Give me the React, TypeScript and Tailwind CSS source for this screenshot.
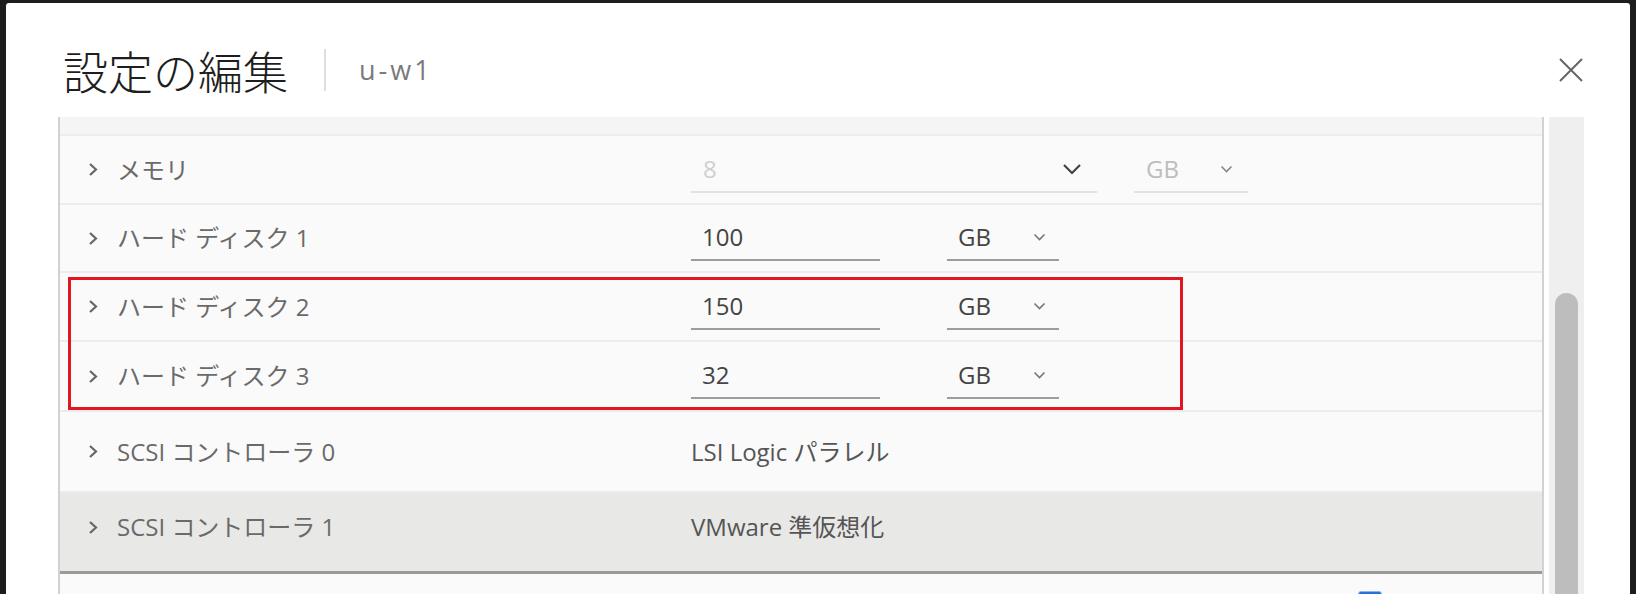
import type { ReactNode } from "react"

const textFont = "font-['Open_Sans','Noto_Sans_CJK_JP',sans-serif]"

function RowChevron() {
  return (
    <svg width="10" height="15" viewBox="0 0 10 15" className="shrink-0 text-[#666]">
      <polyline points="2,2 8,7.5 2,13" fill="none" stroke="currentColor" strokeWidth="2.2" />
    </svg>
  )
}

function DownChevron({ big, muted }: { big?: boolean; muted?: boolean }) {
  if (big) {
    return (
      <svg width="20" height="12" viewBox="0 0 20 12" className="shrink-0 text-[#444]">
        <polyline points="2,2 10,10 18,2" fill="none" stroke="currentColor" strokeWidth="2.2" />
      </svg>
    )
  }
  return (
    <svg
      width="13"
      height="8"
      viewBox="0 0 13 8"
      className={muted ? "shrink-0 text-[#888]" : "shrink-0 text-[#777]"}
    >
      <polyline points="1.5,1.5 6.5,6.5 11.5,1.5" fill="none" stroke="currentColor" strokeWidth="1.6" />
    </svg>
  )
}

function Row({ label, className, children }: { label: string; className: string; children?: ReactNode }) {
  return (
    <div className={`flex border-b-2 border-[#ececec] ${className}`}>
      <div className="flex w-[631px] shrink-0 items-center gap-[19px] pl-[28px] text-[24px] text-[#6a6a6a]">
        <RowChevron />
        <span>{label}</span>
      </div>
      {children}
    </div>
  )
}

function DiskFields({ value }: { value: string }) {
  return (
    <div className="flex items-center">
      <div className="flex h-[46px] w-[189px] items-center border-b-2 border-[#9d9d9d] pl-[11px] text-[24px] text-[#444]">
        {value}
      </div>
      <div className="ml-[67px] flex h-[46px] w-[112px] items-center justify-between border-b-2 border-[#9d9d9d] pl-[11px] pr-[13px] text-[24px] text-[#444]">
        <span>GB</span>
        <DownChevron />
      </div>
    </div>
  )
}

export default function App() {
  return (
    <div className={`h-[594px] w-[1636px] overflow-hidden bg-[#1f1d1b] px-[6px] pt-[3px] ${textFont}`}>
      <div className="h-[700px] rounded-t-[3px] bg-white">
        <div className="flex h-[114px] items-center pl-[57px] pr-[46px] pt-[20px]">
          <h1 className="font-['Noto_Sans_CJK_JP',sans-serif] text-[45px] leading-none font-light text-[#1e1e1e]">
            設定の編集
          </h1>
          <div className="ml-[36px] h-[42px] w-[2px] bg-[#dedede]" />
          <span className="ml-[33px] text-[27px] tracking-[3px] text-[#7a7a7a]">u-w1</span>
          <button type="button" className="ml-auto flex h-[26px] w-[26px] items-center justify-center text-[#666]">
            <svg width="26" height="26" viewBox="0 0 26 26">
              <path d="M2 2 L24 24 M24 2 L2 24" stroke="currentColor" strokeWidth="2" fill="none" />
            </svg>
          </button>
        </div>

        <div className="flex gap-[5px] pl-[52px] pr-[46px]">
          <div className="relative flex-1 border-x-2 border-[#d2d2d2] bg-[#fafafa]">
            <div className="h-[19px] border-b-2 border-[#ececec] bg-[#f5f5f5]" />

            <Row label="メモリ" className="h-[69px]">
              <div className="flex items-center">
                <div className="flex h-[46px] w-[406px] items-center justify-between border-b-2 border-[#e2e2e2] pl-[12px] pr-[15px] text-[24px] text-[#cfcfcf]">
                  <span>8</span>
                  <DownChevron big />
                </div>
                <div className="ml-[37px] flex h-[46px] w-[114px] items-center justify-between border-b-2 border-[#e2e2e2] pl-[12px] pr-[15px] text-[24px] text-[#bdbdbd]">
                  <span>GB</span>
                  <DownChevron muted />
                </div>
              </div>
            </Row>
            <Row label="ハード ディスク 1" className="h-[68px]">
              <DiskFields value="100" />
            </Row>
            <Row label="ハード ディスク 2" className="h-[69px]">
              <DiskFields value="150" />
            </Row>
            <Row label="ハード ディスク 3" className="h-[70px]">
              <DiskFields value="32" />
            </Row>
            <Row label="SCSI コントローラ 0" className="h-[81px]">
              <div className="flex items-center text-[24px] text-[#555]">LSI Logic パラレル</div>
            </Row>
            <div className="flex h-[81px] border-b-[3px] border-[#9a9a9a] bg-[#e8e8e7] pb-[10px]">
              <div className="flex w-[631px] shrink-0 items-center gap-[19px] pl-[28px] text-[24px] text-[#6a6a6a]">
                <RowChevron />
                <span>SCSI コントローラ 1</span>
              </div>
              <div className="flex items-center text-[24px] text-[#555]">VMware 準仮想化</div>
            </div>
            <div className="flex h-[80px] items-start pt-[17px]">
              <div className="flex w-[631px] shrink-0 items-center gap-[19px] pl-[28px] pt-[14px] text-[24px] text-[#6a6a6a]">
                <RowChevron />
                <span>ネットワーク アダプタ 1</span>
              </div>
              <div className="ml-[667px] flex items-center gap-[10px] text-[24px] text-[#555]">
                <span className="h-[24px] w-[24px] rounded-[3px] border border-[#8ab4f0] bg-[#2a6fd8]" />
              </div>
            </div>

            <div className="absolute left-[8px] top-[160px] h-[133px] w-[1115px] border-[3px] border-[#e3161d]" />
          </div>

          <div className="w-[35px] bg-[#efefef] pt-[176px]">
            <div className="mx-auto h-[400px] w-[23px] rounded-t-full bg-[#bdbdbd]" />
          </div>
        </div>
      </div>
    </div>
  )
}
